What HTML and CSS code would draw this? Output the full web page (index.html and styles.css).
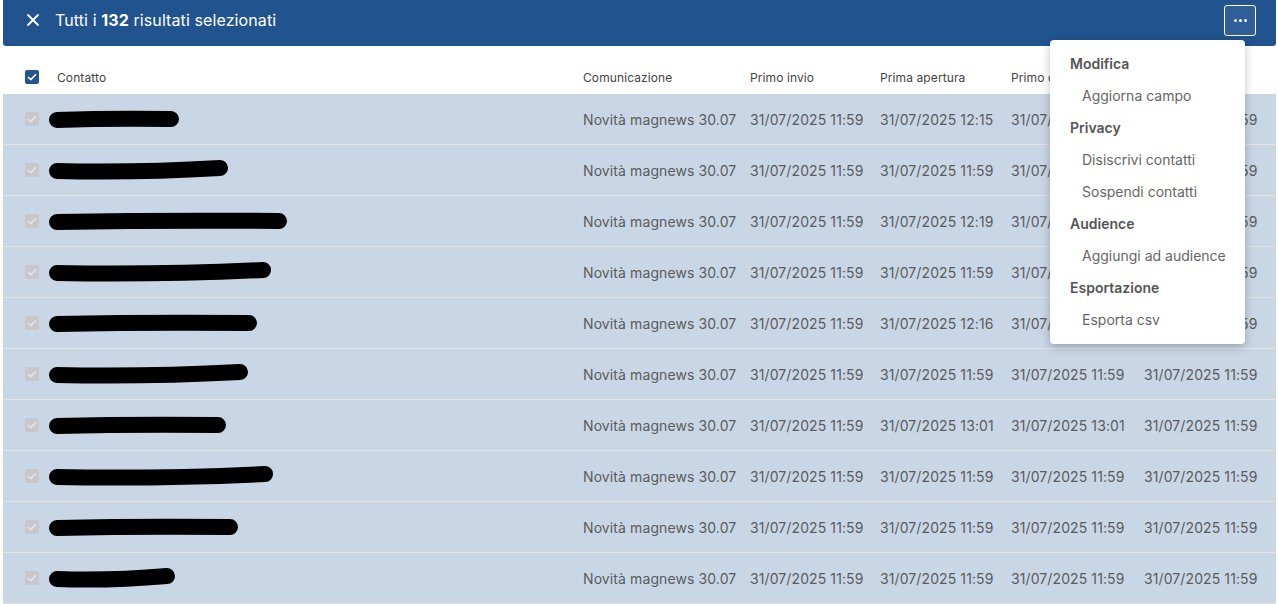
FILE: index.html
```html
<!DOCTYPE html>
<html lang="it">
<head>
  <meta charset="UTF-8" />
  <meta name="viewport" content="width=device-width, initial-scale=1.0"/>
  <title>Risultati selezionati</title>
  <link rel="stylesheet" href="styles.css">
</head>
<body>
  <div class="page">
    <div class="selbar">
      <div class="selbar-left">
        <button class="close-btn" aria-label="Chiudi">
          <svg width="12" height="12" viewBox="0 0 12 12"><path d="M1 1 L11 11 M11 1 L1 11" stroke="#fff" stroke-width="1.8" stroke-linecap="round"/></svg>
        </button>
        <span class="selbar-title">Tutti i <b>132</b> risultati selezionati</span>
      </div>
      <button class="more-btn" aria-label="Altre azioni">
        <span class="dot"></span><span class="dot"></span><span class="dot"></span>
      </button>
    </div>

    <div class="table">
      <div class="row head">
        <div class="cell check"><span class="cbox on"><svg width="10" height="8" viewBox="0 0 10 8"><path d="M1 4 L3.8 6.6 L9 1.2" fill="none" stroke="#fff" stroke-width="1.6"/></svg></span></div>
        <div class="cell">Contatto</div>
        <div class="cell">Comunicazione</div>
        <div class="cell">Primo invio</div>
        <div class="cell">Prima apertura</div>
        <div class="cell">Primo clic</div>
        <div class="cell">Ultimo invio</div>
      </div>
      <div id="rows"></div>
    </div>

    <div class="menu">
      <div class="menu-group">Modifica</div>
      <div class="menu-item">Aggiorna campo</div>
      <div class="menu-group">Privacy</div>
      <div class="menu-item">Disiscrivi contatti</div>
      <div class="menu-item">Sospendi contatti</div>
      <div class="menu-group">Audience</div>
      <div class="menu-item">Aggiungi ad audience</div>
      <div class="menu-group">Esportazione</div>
      <div class="menu-item">Esporta csv</div>
    </div>
  </div>

  <script>
    const data = [
      { len: 130, open: '12:15', click: '12:15' },
      { len: 179, open: '11:59', click: '11:59' },
      { len: 238, open: '12:19', click: '12:19' },
      { len: 222, open: '11:59', click: '11:59' },
      { len: 208, open: '12:16', click: '12:16' },
      { len: 199, open: '11:59', click: '11:59' },
      { len: 177, open: '13:01', click: '13:01' },
      { len: 224, open: '11:59', click: '11:59' },
      { len: 189, open: '11:59', click: '11:59' },
      { len: 126, open: '11:59', click: '11:59' }
    ];

    const rows = document.getElementById('rows');
    data.forEach(function(r, i) {
      const end = r.len - 8;
      const wob = (i % 2 ? 2 : -2);
      const path = 'M8 13 Q ' + (end / 2) + ' ' + (13 + wob) + ' ' + end + ' ' + (11 - wob / 2);
      const row = document.createElement('div');
      row.className = 'row';
      row.innerHTML =
        '<div class="cell check"><span class="cbox off"><svg width="10" height="8" viewBox="0 0 10 8"><path d="M1 4 L3.8 6.6 L9 1.2" fill="none" stroke="#fff" stroke-width="1.6"/></svg></span></div>' +
        '<div class="cell contact"><svg class="scribble" width="' + r.len + '" height="24" viewBox="0 0 ' + r.len + ' 24"><path d="' + path + '" fill="none" stroke="#000" stroke-width="16" stroke-linecap="round"/></svg></div>' +
        '<div class="cell">Novità magnews 30.07</div>' +
        '<div class="cell">31/07/2025 11:59</div>' +
        '<div class="cell">31/07/2025 ' + r.open + '</div>' +
        '<div class="cell">31/07/2025 ' + r.click + '</div>' +
        '<div class="cell">31/07/2025 11:59</div>';
      rows.appendChild(row);
    });
  </script>
</body>
</html>
```

FILE: styles.css
```css
body {
  margin: 0;
  background: #fff;
  font-family: 'Inter', 'Noto Sans', sans-serif;
  color: #555;
}

.page {
  position: relative;
  margin-left: 3px;
  width: 1273px;
}

.selbar {
  background: #21538f;
  height: 46px;
  border-radius: 0 0 3px 3px;
  display: flex;
  align-items: center;
  justify-content: space-between;
  padding: 0 20px 6px 24px;
  box-sizing: border-box;
}

.selbar-left {
  display: flex;
  align-items: center;
  gap: 16px;
}

.close-btn {
  background: none;
  border: none;
  padding: 0;
  width: 12px;
  height: 12px;
  display: flex;
  cursor: pointer;
}

.selbar-title {
  color: #fff;
  font-size: 16px;
  letter-spacing: 0.1px;
}

.selbar-title b {
  font-weight: 700;
}

.more-btn {
  width: 32px;
  height: 31px;
  border: 1px solid #fff;
  border-radius: 3px;
  background: #2f5f98;
  display: flex;
  align-items: center;
  justify-content: center;
  gap: 2px;
  padding: 0;
}

.dot {
  width: 3px;
  height: 3px;
  border-radius: 50%;
  background: #fff;
}

.row {
  display: grid;
  grid-template-columns: 54px 526px 167px 130px 131px 133px 1fr;
  align-items: center;
  height: 50px;
  background: #c9d6e6;
  border-bottom: 1px solid #e6e1dc;
  font-size: 14px;
  color: #5b5b5b;
  letter-spacing: 0.1px;
}

.row.head {
  background: #fff;
  border-bottom: none;
  height: 48px;
  padding-top: 14px;
  box-sizing: border-box;
  font-size: 12px;
  color: #444;
}

.cell {
  white-space: nowrap;
  overflow: hidden;
}

.cell.check {
  padding-left: 22px;
  display: flex;
}

.cell.contact {
  overflow: visible;
}

.scribble {
  display: block;
  margin-left: -8px;
}

.cbox {
  width: 14px;
  height: 14px;
  border-radius: 2px;
  display: flex;
  align-items: center;
  justify-content: center;
}

.cbox.on {
  background: #21538f;
}

.cbox.off {
  background: #c8c8cc;
}

.cbox.off svg path {
  stroke: #e4e4e6;
}

.menu {
  position: absolute;
  top: 40px;
  left: 1047px;
  width: 195px;
  background: #fff;
  border-radius: 4px;
  box-shadow: 0 3px 10px rgba(0, 0, 0, 0.25);
  padding: 8px 0;
}

.menu-group,
.menu-item {
  height: 32px;
  line-height: 32px;
  font-size: 14px;
  white-space: nowrap;
}

.menu-group {
  padding-left: 20px;
  font-weight: 600;
  color: #555;
}

.menu-item {
  padding-left: 32px;
  color: #666;
}
```
